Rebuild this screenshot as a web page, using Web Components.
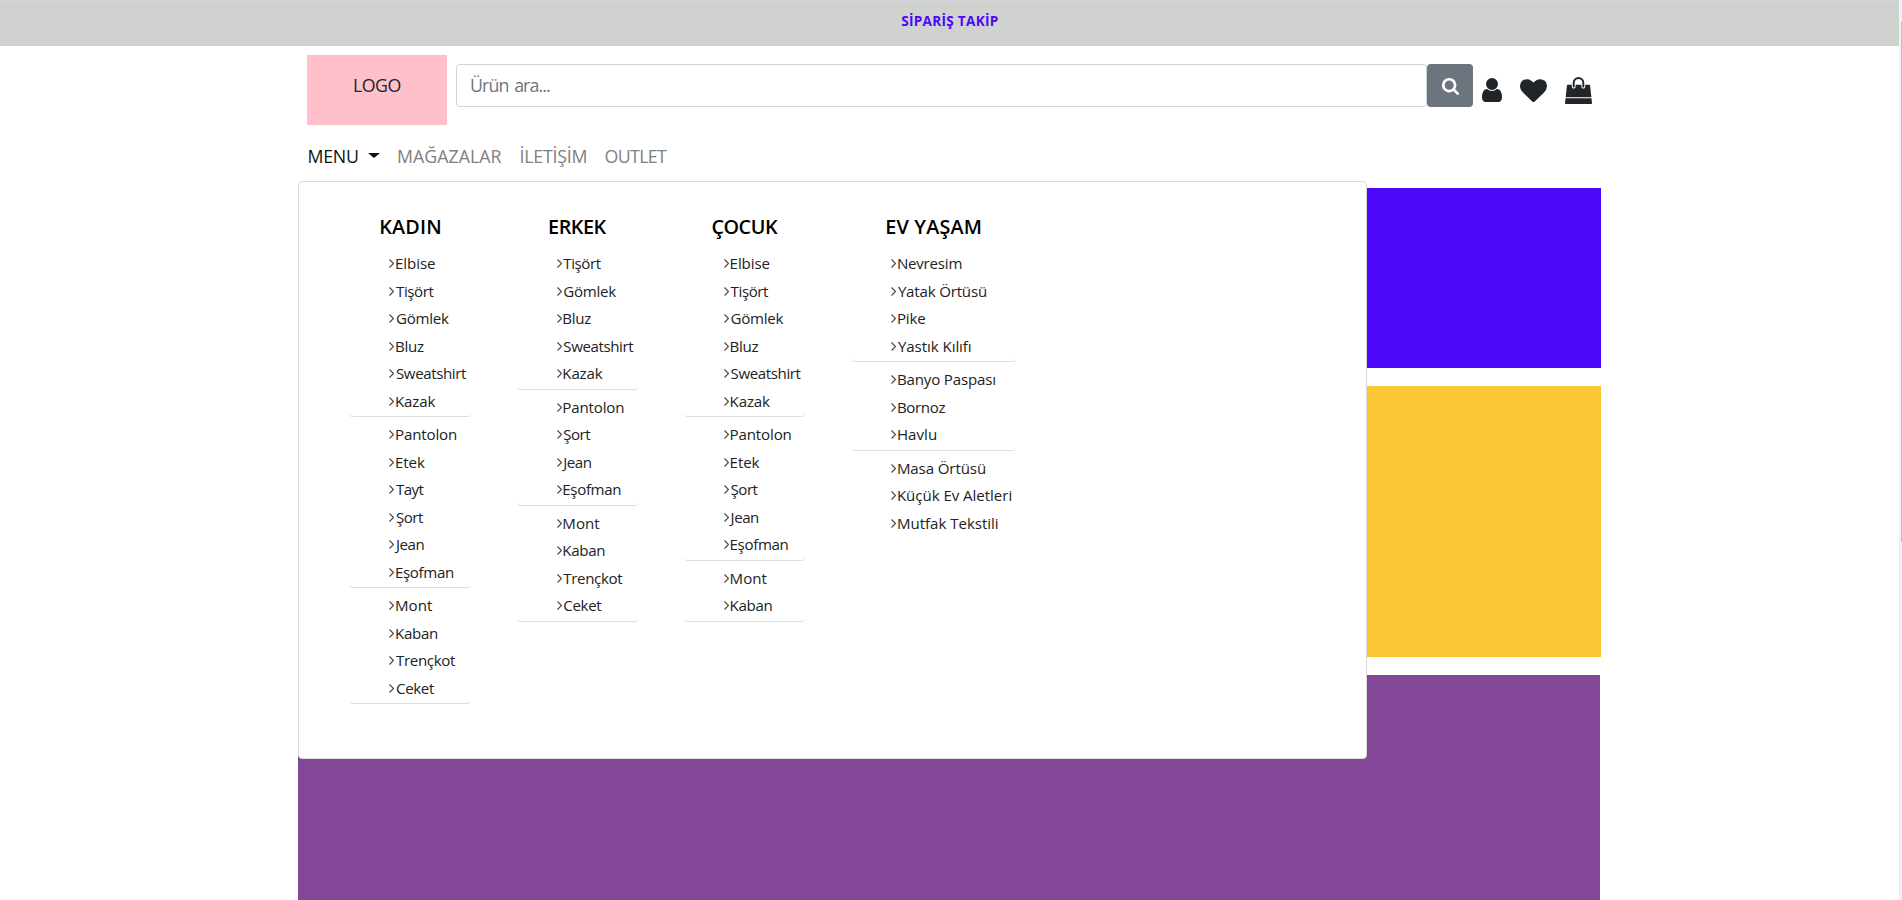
<!DOCTYPE html>
<html lang="tr">
<head>
<meta charset="utf-8">
<title>Mağaza</title>
<style>
html,body{margin:0;height:100%;overflow:hidden;background:#fff;font-family:"Open Sans","Noto Sans",sans-serif;color:#212529}
</style>
</head>
<body>
<shop-page></shop-page>
<script>
const ctx = document.createElement('canvas').getContext('2d');

/* Text label whose glyphs are tracked to fill exactly `w` pixels. */
class FitText extends HTMLElement {
  connectedCallback() {
    const root = this.attachShadow({mode: 'open'});
    root.innerHTML = `<style>:host{display:inline-block;white-space:nowrap}span{display:inline-block}</style><span><slot></slot></span>`;
    const w = parseFloat(this.getAttribute('w'));
    const ws = parseFloat(this.getAttribute('ws') || 0);
    const text = this.textContent;
    const cs = getComputedStyle(this);
    ctx.font = `${cs.fontWeight} ${cs.fontSize} ${cs.fontFamily}`;
    const m = ctx.measureText(text);
    const ink = m.actualBoundingBoxLeft + m.actualBoundingBoxRight + ws * (text.split(' ').length - 1);
    const span = root.querySelector('span');
    span.style.letterSpacing = ((w - ink) / (text.length - 1)).toFixed(3) + 'px';
    span.style.wordSpacing = ws + 'px';
    span.style.marginLeft = Math.min(0, m.actualBoundingBoxLeft).toFixed(2) + 'px';
    this.style.width = w + 'px';
  }
}
customElements.define('fit-text', FitText);

const ICONS = {
  search: ['0 0 1664 1664', 'M1152 704q0-185-131.500-316.500t-316.500-131.500-316.500 131.500-131.500 316.500 131.500 316.500 316.500 131.500 316.500-131.500 131.500-316.500zm512 832q0 52-38 90t-90 38q-54 0-90-38l-343-342q-179 124-399 124-143 0-273.500-55.500t-225-150-150-225-55.500-273.500 55.500-273.500 150-225 225-150 273.500-55.500 273.500 55.500 225 150 150 225 55.500 273.500q0 220-124 399l343 343q37 37 37 90z'],
  user: ['256 128 1280 1536', 'M1536 1399q0 109-62.500 187t-150.500 78h-854q-88 0-150.500-78t-62.500-187q0-85 8.500-160.500t31.500-152 58.500-131 94-89 134.500-34.500q131 128 313 128t313-128q76 0 134.500 34.500t94 89 58.500 131 31.500 152 8.500 160.500zm-256-887q0 159-112.500 271.500t-271.500 112.500-271.500-112.500-112.500-271.500 112.500-271.500 271.500-112.500 271.500 112.500 112.500 271.500z'],
  heart: ['0 128 1792 1536', 'M896 1664q-26 0-44-18l-624-602q-10-8-27.500-26t-55.500-65.500-68-97.500-53.500-121-23.500-138q0-220 127-344t351-124q62 0 126.500 21.500t120 58 95.500 68.500 76 68q36-36 76-68t95.500-68.500 120-58 126.500-21.500q224 0 351 124t127 344q0 221-229 450l-623 600q-18 18-44 18z'],
  bag: ['0 0 1792 1792', 'M1757 1408l35 313q3 28-16 50-19 21-48 21h-1664q-29 0-48-21-19-22-16-50l35-313h1722zm-93-839l86 775h-1708l86-775q3-24 21-40.500t43-16.500h256v128q0 53 37.500 90.500t90.500 37.500 90.500-37.500 37.500-90.500v-128h384v128q0 53 37.500 90.500t90.500 37.500 90.500-37.500 37.500-90.500v-128h256q25 0 43 16.500t21 40.500zm-384-185v256q0 26-19 45t-45 19-45-19-19-45v-256q0-106-75-181t-181-75-181 75-75 181v256q0 26-19 45t-45 19-45-19-19-45v-256q0-159 112.500-271.500t271.500-112.500 271.500 112.500 112.500 271.500z']
};
customElements.define('shop-icon', class extends HTMLElement {
  connectedCallback() {
    const [vb, d] = ICONS[this.getAttribute('name')];
    this.attachShadow({mode: 'open'}).innerHTML =
      `<style>:host{display:block}svg{display:block;width:100%;height:100%;fill:currentColor}</style><svg viewBox="${vb}"><path d="${d}"/></svg>`;
  }
});

customElements.define('top-bar', class extends HTMLElement {
  connectedCallback() {
    this.attachShadow({mode: 'open'}).innerHTML = `<style>
:host{display:flex;justify-content:center;box-sizing:border-box;height:46px;border-top:1px solid #d5d7dc;background:#d0d2d0;color:#4b08f9;font-size:13.6px;font-weight:700;line-height:20px;padding-top:10px}
</style><fit-text w="96.5">SİPARİŞ TAKİP</fit-text>`;
  }
});

customElements.define('search-row', class extends HTMLElement {
  connectedCallback() {
    this.attachShadow({mode: 'open'}).innerHTML = `<style>
:host{display:flex;align-items:flex-start;padding:9px 9px 0;font-size:17.8px;line-height:27px}
.logo{box-sizing:border-box;width:140px;height:70px;background:#ffc0cb;padding:17px 0 0 47px}
.field{box-sizing:border-box;width:971px;height:43px;margin:9px 0 0 9px;border:1px solid #ced4da;border-radius:4px;padding:7px 14px;color:#6c757d}
.go{display:grid;place-items:center;width:46px;height:43px;margin-top:9px;border-radius:4px;background:#6c757d;color:#fff}
.go shop-icon{width:17px;height:17px;margin:1px 0 0 1px}
.user{width:20px;height:24px;margin:23px 0 0 9px}
.heart{width:27px;height:23.500px;margin:23.500px 0 0 18px}
.bag{width:27px;height:27px;margin:22px 0 0 18px}
</style>
<div class="logo"><fit-text w="46.5">LOGO</fit-text></div>
<div class="field"><fit-text w="79" ws="2">Ürün ara...</fit-text></div>
<div class="go"><shop-icon name="search"></shop-icon></div>
<shop-icon class="user" name="user"></shop-icon><shop-icon class="heart" name="heart"></shop-icon><shop-icon class="bag" name="bag"></shop-icon>`;
  }
});

customElements.define('nav-row', class extends HTMLElement {
  connectedCallback() {
    this.attachShadow({mode: 'open'}).innerHTML = `<style>
:host{display:flex;height:63px;box-sizing:border-box;padding:18px 0 0 10.500px;font-size:17.8px;line-height:27px;color:#808080}
.on{color:#111}
.caret{border:6px solid transparent;border-top:5px solid #111;border-bottom:0;margin:10px 18.500px 0 9.500px;height:0}
fit-text+fit-text{margin-left:19px}
</style><fit-text class="on" w="49.5">MENU</fit-text><i class="caret"></i><fit-text w="103.5">MAĞAZALAR</fit-text><fit-text w="66">İLETİŞİM</fit-text><fit-text w="61.5">OUTLET</fit-text>`;
  }
});

const W = {'Elbise':39,'Tişört':38.5,'Gömlek':53,'Bluz':28,'Sweatshirt':71,'Kazak':39.5,'Pantolon':61,'Etek':29,'Tayt':28.5,'Şort':28,'Jean':30.5,'Eşofman':58,'Mont':37,'Kaban':42,'Trençkot':60,'Ceket':39,'Nevresim':63.5,'Yatak Örtüsü':88,'Pike':27.5,'Yastık Kılıfı':73,'Banyo Paspası':97.5,'Bornoz':47.5,'Havlu':38,'Masa Örtüsü':87,'Küçük Ev Aletleri':113.5,'Mutfak Tekstili':100};

customElements.define('menu-column', class extends HTMLElement {
  connectedCallback() {
    const groups = this.getAttribute('items').split('|').map(g => g.split(','));
    this.attachShadow({mode: 'open'}).innerHTML = `<style>
:host{display:block;color:#212529}
.head{display:block;text-align:center;font-size:19.8px;font-weight:600;line-height:28px;color:#000;height:33.600px}
ul{list-style:none;margin:0;padding:4px 0 1px 40px;border-bottom:1px solid #dcdedf;border-radius:4px}
ul.open{border-color:transparent}
li{display:flex;align-items:center;height:27.5px;font-size:15.1px;line-height:27.5px;color:#222}
svg{width:5px;height:9px;margin-right:1.600px;flex:none}
</style><div class="head"><fit-text w="${this.getAttribute('hw')}">${this.getAttribute('title-text')}</fit-text></div>` +
    groups.map((g, i) => `<ul class="${this.hasAttribute('open-end') && i === groups.length - 1 ? 'open' : ''}">` +
      g.map(t => `<li><svg viewBox="0 0 5 9" fill="none" stroke="#444" stroke-width="1.1"><path d="M.5.5L4.500 4.500.5 8.500"/></svg><fit-text w="${W[t]}">${t}</fit-text></li>`).join('') + '</ul>').join('');
  }
});

customElements.define('mega-menu', class extends HTMLElement {
  connectedCallback() {
    this.attachShadow({mode: 'open'}).innerHTML = `<style>
:host{display:flex;align-items:flex-start;box-sizing:border-box;background:#fff;border:1px solid #d9d9d9;border-radius:4px;padding:30.500px 0 0 50.400px}
menu-column{width:121.500px;margin-right:45.800px}
menu-column:last-child{width:164.500px;margin-right:0}
</style>
<menu-column title-text="KADIN" hw="60" items="Elbise,Tişört,Gömlek,Bluz,Sweatshirt,Kazak|Pantolon,Etek,Tayt,Şort,Jean,Eşofman|Mont,Kaban,Trençkot,Ceket"></menu-column>
<menu-column title-text="ERKEK" hw="57.5" items="Tişört,Gömlek,Bluz,Sweatshirt,Kazak|Pantolon,Şort,Jean,Eşofman|Mont,Kaban,Trençkot,Ceket"></menu-column>
<menu-column title-text="ÇOCUK" hw="65.5" items="Elbise,Tişört,Gömlek,Bluz,Sweatshirt,Kazak|Pantolon,Etek,Şort,Jean,Eşofman|Mont,Kaban"></menu-column>
<menu-column title-text="EV YAŞAM" hw="94.5" open-end items="Nevresim,Yatak Örtüsü,Pike,Yastık Kılıfı|Banyo Paspası,Bornoz,Havlu|Masa Örtüsü,Küçük Ev Aletleri,Mutfak Tekstili"></menu-column>`;
  }
});

customElements.define('shop-page', class extends HTMLElement {
  connectedCallback() {
    this.attachShadow({mode: 'open'}).innerHTML = `<style>
:host{display:grid;grid-template-columns:1899px 3px;height:900px;overflow:hidden}
.wrap{width:1303px;margin-left:298px}
.stage{position:relative;display:flex;flex-direction:column;gap:18px}
mega-menu{position:absolute;left:0;top:-7px;width:1069px;height:578px}
.a{height:180px;background:#4b08f9}
.b{height:271px;background:#fbc737}
.c{height:225px;background:#834798;margin-right:1px}
.scroll{background:#f1f1f1;padding:22px 0 0 2px}
.thumb{height:520px;background:#c1c1c1}
</style>
<div><top-bar></top-bar><div class="wrap"><search-row></search-row><nav-row></nav-row>
<div class="stage"><div class="a"></div><div class="b"></div><div class="c"></div><mega-menu></mega-menu></div></div></div>
<div class="scroll"><div class="thumb"></div></div>`;
  }
});
</script>
</body>
</html>
